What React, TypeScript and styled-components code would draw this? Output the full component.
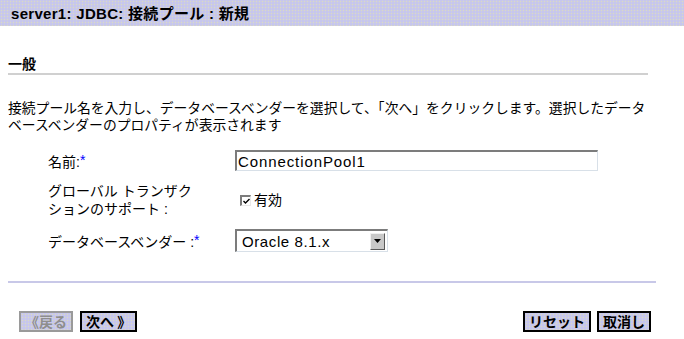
import styled, { createGlobalStyle } from "styled-components";

const GlobalStyle = createGlobalStyle`
  html, body {
    margin: 0;
    padding: 0;
    background: #ffffff;
  }
  body {
    font-family: "Liberation Sans", "Noto Sans CJK JP", sans-serif;
    color: #000000;
  }
`;

const dotted = `
  background-color: #c6c6ee;
  background-image: radial-gradient(circle, #d9d9c6 0.7px, transparent 1.1px);
  background-size: 3px 3px;
`;

const TitleBar = styled.header`
  ${dotted}
  height: 26px;
  padding-left: 11px;
  font-size: 15px;
  font-weight: 700;
  line-height: 27px;
  letter-spacing: 0.3px;
  white-space: nowrap;
`;

const Content = styled.main`
  padding: 0 8px;
`;

const SectionHeading = styled.h2`
  margin: 29px 0 0;
  width: 640px;
  font-size: 14px;
  font-weight: 700;
  line-height: 18px;
  border-bottom: 2px solid #d0d0d0;
`;

const Description = styled.p`
  margin: 25px 0 0;
  font-size: 13.8px;
  line-height: 17px;
  white-space: nowrap;
`;

const FormGrid = styled.div`
  display: grid;
  grid-template-columns: 187px auto;
  grid-template-rows: 21px 36px 23px;
  row-gap: 11px;
  align-items: center;
  margin-top: 16px;
  padding-left: 40px;
`;

const Label = styled.div`
  font-size: 14px;
  line-height: 18px;
  white-space: nowrap;
`;

const Required = styled.span`
  color: #0000ff;
  font-size: 14px;
  vertical-align: 2px;
`;

const sunken = `
  box-sizing: border-box;
  border-top: 2px solid #7c7c7c;
  border-left: 2px solid #7c7c7c;
  border-right: 1px solid #d8e0e8;
  border-bottom: 1px solid #d8e0e8;
  background: #ffffff;
`;

const TextInput = styled.div`
  ${sunken}
  width: 363px;
  height: 21px;
  padding-left: 1px;
  font-size: 15px;
  line-height: 19px;
  letter-spacing: 0.9px;
`;

const CheckRow = styled.label`
  display: flex;
  align-items: center;
  gap: 3px;
  padding-left: 5px;
  font-size: 14px;
  line-height: 18px;
`;

const CheckBox = styled.span`
  ${sunken}
  display: inline-flex;
  align-items: center;
  justify-content: center;
  width: 11px;
  height: 11px;
  border-right-color: #e8e8e8;
  border-bottom-color: #e8e8e8;
`;

const Select = styled.div`
  ${sunken}
  display: flex;
  align-items: center;
  justify-content: space-between;
  width: 153px;
  height: 23px;
  padding: 0 2px 0 5px;
  font-size: 15px;
  letter-spacing: 0.6px;
`;

const DropButton = styled.span`
  box-sizing: border-box;
  display: inline-flex;
  align-items: center;
  justify-content: center;
  width: 15px;
  height: 17px;
  background: #c8c8c8;
  border-top: 1px solid #f0f0f0;
  border-left: 1px solid #f0f0f0;
  border-right: 1px solid #5a5a5a;
  border-bottom: 1px solid #5a5a5a;
`;

const Separator = styled.div`
  margin-top: 29px;
  width: 648px;
  height: 2px;
  background: #c8c8e8;
`;

const ButtonBar = styled.div`
  display: flex;
  justify-content: space-between;
  margin-top: 28px;
  padding: 0 25px 0 11px;
`;

const ButtonGroup = styled.div<{ $gap: number }>`
  display: flex;
  gap: ${({ $gap }) => $gap}px;
`;

const WizardButton = styled.button<{ $disabled?: boolean }>`
  ${dotted}
  box-sizing: border-box;
  height: 21px;
  padding: 0 4px;
  border: 2px solid ${({ $disabled }) => ($disabled ? "#9a9a9a" : "#000000")};
  color: ${({ $disabled }) => ($disabled ? "#8e8e8e" : "#000000")};
  font-family: "Noto Sans CJK JP", "Liberation Sans", sans-serif;
  font-size: 14px;
  font-weight: 700;
  line-height: 17px;
  white-space: nowrap;
  cursor: pointer;
`;

export default function App() {
  return (
    <>
      <GlobalStyle />
      <TitleBar>server1: JDBC: 接続プール : 新規</TitleBar>
      <Content>
        <SectionHeading>一般</SectionHeading>
        <Description>
          接続プール名を入力し、データベースベンダーを選択して、「次へ」をクリックします。選択したデータ
          <br />
          ベースベンダーのプロパティが表示されます
        </Description>

        <FormGrid>
          <Label>
            名前:<Required>*</Required>
          </Label>
          <TextInput>ConnectionPool1</TextInput>

          <Label>
            グローバル トランザク
            <br />
            ションのサポート :
          </Label>
          <CheckRow>
            <CheckBox>
              <svg width="7" height="6" viewBox="0 0 7 6">
                <path d="M0.5 3 L2.5 5 L6.5 1" fill="none" stroke="#000" strokeWidth="1.4" />
              </svg>
            </CheckBox>
            有効
          </CheckRow>

          <Label>
            データベースベンダー :<Required>*</Required>
          </Label>
          <Select>
            Oracle 8.1.x
            <DropButton>
              <svg width="7" height="4" viewBox="0 0 7 4">
                <path d="M0 0 H7 L3.5 4 Z" fill="#000" />
              </svg>
            </DropButton>
          </Select>
        </FormGrid>

        <Separator />

        <ButtonBar>
          <ButtonGroup $gap={7}>
            <WizardButton $disabled type="button">
              《戻る
            </WizardButton>
            <WizardButton type="button">次へ 》</WizardButton>
          </ButtonGroup>
          <ButtonGroup $gap={6}>
            <WizardButton type="button">リセット</WizardButton>
            <WizardButton type="button">取消し</WizardButton>
          </ButtonGroup>
        </ButtonBar>
      </Content>
    </>
  );
}
